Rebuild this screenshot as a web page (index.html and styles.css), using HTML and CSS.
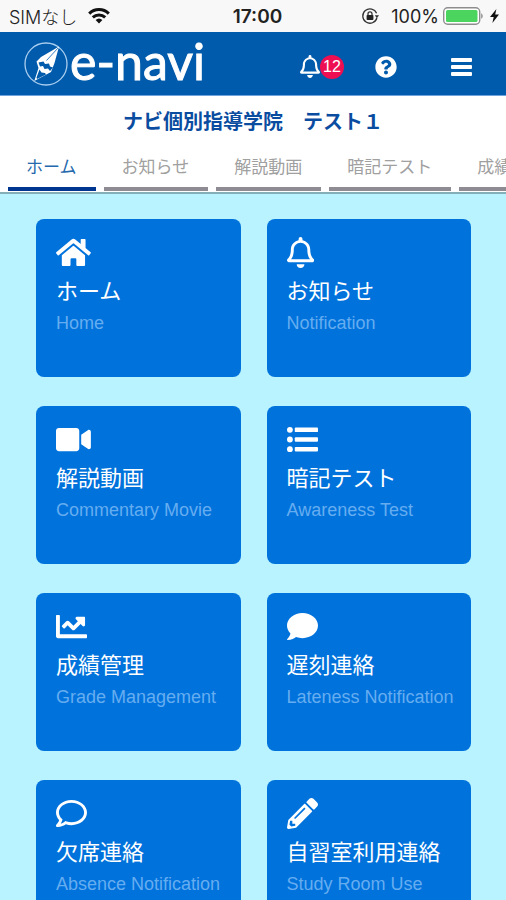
FILE: index.html
```html
<!DOCTYPE html>
<html lang="ja">
<head>
    <meta charset="UTF-8">
    <meta name="viewport" content="width=device-width, initial-scale=1.0">
    <title>e-navi</title>
    <link rel="stylesheet" href="styles.css">
</head>
<body>
    <div class="status-bar">
        <div class="status-left">
            <span>SIMなし</span>
            <svg class="wifi" viewBox="0 0 22 16" width="22" height="16" fill="none" stroke="#111" stroke-width="3">
                <path d="M1.2 5.6a14 14 0 0 1 19.6 0"/>
                <path d="M4.8 9.4a9 9 0 0 1 12.4 0"/>
                <path d="M11 15.5l-3.4-3.4a5 5 0 0 1 6.8 0z" fill="#111" stroke="none"/>
            </svg>
        </div>
        <div class="clock">17:00</div>
        <div class="status-right">
            <svg class="lock" viewBox="0 0 18 18" width="18" height="18" fill="none" stroke="#333" stroke-width="1.3">
                <path d="M15.6 6.2A7.2 7.2 0 1 0 15.9 11"/>
                <path d="M13.8 8.2h4.2l-2.1 3z" fill="#333" stroke="none"/>
                <rect x="5.6" y="8" width="6.8" height="5" rx="0.8" fill="#222" stroke="none"/>
                <path d="M7 8.4V6.8a2 2 0 0 1 4 0v1.6"/>
            </svg>
            <span>100%</span>
            <svg class="battery" viewBox="0 0 40 18" width="40" height="18">
                <rect x="0.7" y="0.7" width="36" height="16.6" rx="4" fill="#fff" stroke="#8d8d8d" stroke-width="1.4"/>
                <rect x="3" y="3" width="31.5" height="12" rx="1.5" fill="#4cd55e"/>
                <path d="M38.2 6.2c2 1 2 4.6 0 5.6z" fill="#8d8d8d"/>
            </svg>
            <svg class="bolt" viewBox="0 0 9 14" width="9" height="14">
                <path d="M6.4 0L0 8h3.7L2.4 14 9 5.6H5.2z" fill="#111"/>
            </svg>
        </div>
    </div>

    <header class="header">
        <a class="logo" href="#">
            <svg viewBox="0 0 44 44" width="44" height="44">
                <circle cx="22" cy="22" r="21" fill="none" stroke="#a9cdee" stroke-width="1.3"/>
                <path d="M35 4.500L17 15l-4.500 4.500 2 6.500-4.200 13L27 30l3.500-9z" fill="#fff"/>
                <path d="M34 6L22.500 18.500" fill="none" stroke="#005bac" stroke-width="0.800"/>
                <path d="M14.500 20.500l5-1 1.500 2.500 4-.5 1 3 3 1-3 3.500-2-2.500-3.500.5-1.500-3-3 .5z" fill="#005bac"/>
                <path d="M15.500 27.500l2 3 3.500.5 1 1.500-9 4.500-.5-1.500z" fill="#005bac"/>
            </svg>
            <span>e-navi</span>
        </a>
        <nav class="header-nav">
            <button class="icon-button bell-button" type="button" aria-label="お知らせ">
                <svg viewBox="0 0 448 512" width="20" height="23"><use href="#icon-bell"/></svg>
                <span class="badge">12</span>
            </button>
            <button class="icon-button" type="button" aria-label="ヘルプ">
                <svg viewBox="0 0 512 512" width="22" height="22"><path d="M504 256c0 136.997-111.043 248-248 248S8 392.997 8 256C8 119.083 119.043 8 256 8s248 111.083 248 248zM262.655 90c-54.497 0-89.255 22.957-116.549 63.758-3.536 5.286-2.353 12.415 2.715 16.258l34.699 26.31c5.205 3.947 12.621 3.008 16.665-2.122 17.864-22.658 30.113-35.797 57.303-35.797 20.429 0 45.698 13.148 45.698 32.958 0 14.976-12.363 22.667-32.534 33.976C247.128 238.528 216 254.941 216 296v4c0 6.627 5.373 12 12 12h56c6.627 0 12-5.373 12-12v-1.333c0-28.462 83.186-29.647 83.186-106.667 0-58.002-60.165-102-116.531-102zM256 338c-25.365 0-46 20.635-46 46 0 25.364 20.635 46 46 46s46-20.636 46-46c0-25.365-20.635-46-46-46z"/></svg>
            </button>
            <button class="icon-button" type="button" aria-label="メニュー">
                <svg viewBox="0 0 21 20" width="21" height="20">
                    <rect y="1" width="21" height="4" rx="1"/>
                    <rect y="8" width="21" height="4" rx="1"/>
                    <rect y="15" width="21" height="4" rx="1"/>
                </svg>
            </button>
        </nav>
    </header>

    <div class="school">
        <h1>ナビ個別指導学院　テスト１</h1>
        <nav class="tabs">
            <a class="tab active" href="#">ホーム</a>
            <a class="tab" href="#">お知らせ</a>
            <a class="tab" href="#">解説動画</a>
            <a class="tab" href="#">暗記テスト</a>
            <a class="tab" href="#">成績管理</a>
        </nav>
    </div>

    <main class="menu">
        <a class="card" href="#">
            <svg viewBox="0 0 576 512"><path d="M280.37 148.26L96 300.11V464a16 16 0 0 0 16 16l112.06-.29a16 16 0 0 0 15.92-16V368a16 16 0 0 1 16-16h64a16 16 0 0 1 16 16v95.64a16 16 0 0 0 16 16.05L464 480a16 16 0 0 0 16-16V300L295.67 148.26a12.19 12.19 0 0 0-15.3 0zM571.6 251.47L488 182.56V44.05a12 12 0 0 0-12-12h-56a12 12 0 0 0-12 12v72.61L318.47 43a48 48 0 0 0-61 0L4.34 251.47a12 12 0 0 0-1.6 16.9l25.5 31A12 12 0 0 0 45.15 301l235.22-193.74a12.19 12.19 0 0 1 15.3 0L530.9 301a12 12 0 0 0 16.9-1.6l25.5-31a12 12 0 0 0-1.7-16.93z"/></svg>
            <h2>ホーム</h2>
            <p>Home</p>
        </a>
        <a class="card" href="#">
            <svg viewBox="0 0 448 512"><path id="icon-bell" d="M439.39 362.29c-19.32-20.76-55.47-51.99-55.47-154.29 0-77.7-54.48-139.9-127.94-155.16V32c0-17.67-14.32-32-31.98-32s-31.98 14.33-31.98 32v20.84C118.56 68.1 64.08 130.3 64.08 208c0 102.3-36.15 133.53-55.47 154.29-6 6.45-8.66 14.16-8.61 21.71.11 16.4 12.98 32 32.1 32h383.8c19.12 0 32-15.6 32.1-32 .05-7.55-2.61-15.27-8.61-21.71zM67.53 368c21.22-27.97 44.42-74.33 44.53-159.42 0-.2-.06-.38-.06-.58 0-61.86 50.14-112 112-112s112 50.14 112 112c0 .2-.06.38-.06.58.11 85.1 23.31 131.46 44.53 159.42H67.53zM224 512c35.32 0 63.97-28.65 63.97-64H160.03c0 35.35 28.65 64 63.97 64z"/></svg>
            <h2>お知らせ</h2>
            <p>Notification</p>
        </a>
        <a class="card" href="#">
            <svg viewBox="0 0 576 512"><path d="M336.2 64H47.8C21.4 64 0 85.4 0 111.8v288.4C0 426.6 21.4 448 47.8 448h288.4c26.4 0 47.8-21.4 47.8-47.8V111.8c0-26.4-21.4-47.8-47.8-47.8zm189.4 37.7L416 177.3v157.4l109.6 75.5c21.2 14.6 50.4-.3 50.4-25.8V127.5c0-25.4-29.1-40.4-50.4-25.8z"/></svg>
            <h2>解説動画</h2>
            <p>Commentary Movie</p>
        </a>
        <a class="card" href="#">
            <svg viewBox="0 0 512 512">
                <circle cx="48" cy="96" r="48"/>
                <circle cx="48" cy="256" r="48"/>
                <circle cx="48" cy="416" r="48"/>
                <rect x="128" y="58" width="384" height="76" rx="16"/>
                <rect x="128" y="218" width="384" height="76" rx="16"/>
                <rect x="128" y="378" width="384" height="76" rx="16"/>
            </svg>
            <h2>暗記テスト</h2>
            <p>Awareness Test</p>
        </a>
        <a class="card" href="#">
            <svg viewBox="0 0 512 512"><path d="M496 384H64V80c0-8.84-7.16-16-16-16H16C7.16 64 0 71.16 0 80v336c0 17.67 14.33 32 32 32h464c8.84 0 16-7.16 16-16v-32c0-8.84-7.16-16-16-16zM464 96H345.94c-21.38 0-32.09 25.85-16.97 40.97l32.4 32.4L288 242.75l-73.37-73.37c-12.5-12.5-32.76-12.5-45.25 0l-68.69 68.69c-6.25 6.25-6.25 16.38 0 22.63l22.62 22.62c6.25 6.25 16.38 6.25 22.63 0L192 237.25l73.37 73.37c12.5 12.5 32.76 12.5 45.25 0l96-96 32.4 32.4c15.12 15.12 40.97 4.41 40.97-16.97V112c.01-8.84-7.15-16-15.99-16z"/></svg>
            <h2>成績管理</h2>
            <p>Grade Management</p>
        </a>
        <a class="card" href="#">
            <svg viewBox="0 0 512 512"><path d="M256 32C114.6 32 0 125.1 0 240c0 49.6 21.4 95 57 130.7C44.5 421.1 2.7 466 2.2 466.5c-2.2 2.3-2.8 5.7-1.5 8.7S4.8 480 8 480c66.3 0 116-31.8 140.6-51.4 32.7 12.3 69 19.4 107.4 19.4 141.4 0 256-93.1 256-208S397.4 32 256 32z"/></svg>
            <h2>遅刻連絡</h2>
            <p>Lateness Notification</p>
        </a>
        <a class="card" href="#">
            <svg viewBox="0 0 512 512"><path d="M256 32C114.6 32 0 125.1 0 240c0 47.6 19.9 91.2 52.9 126.3C38 405.7 7 439.1 6.5 439.5c-6.6 7-8.4 17.2-4.6 26S14.4 480 24 480c61.5 0 110-25.7 139.1-46.3C192 442.8 223.2 448 256 448c141.4 0 256-93.1 256-208S397.4 32 256 32zm0 368c-26.7 0-53.1-4.1-78.4-12.1l-22.7-7.2-19.5 13.8c-14.3 10.1-33.9 21.4-57.5 29 7.3-12.1 14.4-25.7 19.9-40.2l10.6-28.1-20.6-21.8C69.7 314.1 48 282.2 48 240c0-88.2 93.3-160 208-160s208 71.8 208 160-93.3 160-208 160z"/></svg>
            <h2>欠席連絡</h2>
            <p>Absence Notification</p>
        </a>
        <a class="card" href="#">
            <svg viewBox="0 0 512 512"><path d="M497.9 142.1l-46.1 46.1c-4.7 4.7-12.3 4.7-17 0l-111-111c-4.7-4.7-4.7-12.3 0-17l46.1-46.1c18.7-18.7 49.1-18.7 67.9 0l60.1 60.1c18.8 18.7 18.8 49.1 0 67.9zM284.2 99.8L21.6 362.4.4 483.9c-2.9 16.4 11.4 30.6 27.8 27.8l121.5-21.3 262.6-262.6c4.7-4.7 4.7-12.3 0-17l-111-111c-4.8-4.7-12.4-4.7-17.1 0zM124.1 339.9c-5.5-5.5-5.5-14.3 0-19.8l154-154c5.5-5.5 14.3-5.5 19.8 0s5.500 14.300 0 19.800l-154 154c-5.500 5.500-14.300 5.500-19.800 0zM88 424h48v36.300l-64.500 11.300-31.100-31.100L51.700 376H88v48z"/></svg>
            <h2>自習室利用連絡</h2>
            <p>Study Room Use</p>
        </a>
    </main>
</body>
</html>
```
FILE: styles.css
```css
* {
    box-sizing: border-box;
}

body {
    font-family: "Liberation Sans", "Noto Sans CJK JP", sans-serif;
    background-color: #b8f3ff;
    margin: 0;
    height: 100vh;
    display: flex;
    flex-direction: column;
    overflow: hidden;
}

a {
    color: inherit;
    text-decoration: none;
}

svg {
    display: block;
    flex-shrink: 0;
}

.status-bar {
    display: grid;
    grid-template-columns: 1fr auto 1fr;
    align-items: center;
    flex-shrink: 0;
    height: 32px;
    padding-left: 9px;
    background-color: #f8f8f8;
    color: #222;
    font-family: Inter, "Noto Sans CJK JP", sans-serif;
    font-size: 18px;
}

.status-left,
.status-right {
    display: flex;
    align-items: center;
}

.status-left {
    gap: 11px;
    font-weight: 300;
}

.status-right {
    justify-content: flex-end;
    padding-right: 7px;
}

.lock {
    margin-right: 12px;
}

.battery {
    margin: 0 7px 0 4px;
}

.clock {
    font-size: 19px;
    font-weight: 600;
}

.header {
    display: flex;
    justify-content: space-between;
    align-items: center;
    flex-shrink: 0;
    height: 64px;
    padding: 0 34px 0 24px;
    background-color: #005bac;
    border-bottom: 1px solid #6fa3dc;
    color: #fff;
}

.logo {
    display: flex;
    align-items: center;
    gap: 2px;
}

.logo span {
    font-family: Lato, sans-serif;
    font-size: 50px;
    line-height: 50px;
    height: 56px;
    -webkit-text-stroke: 1px #fff;
}

.header-nav {
    display: flex;
    align-items: center;
    padding-top: 6px;
}

.icon-button {
    display: flex;
    align-items: center;
    padding: 0;
    border: none;
    background: none;
    color: #fff;
    fill: currentColor;
    font-family: inherit;
    cursor: pointer;
}

.icon-button + .icon-button {
    margin-left: 54px;
}

.bell-button + .icon-button {
    margin-left: 31px;
}

.badge {
    width: 24px;
    height: 24px;
    border-radius: 50%;
    background-color: #ee0f52;
    font-size: 16px;
    line-height: 24px;
    text-align: center;
}

.school {
    flex-shrink: 0;
    background-color: #fff;
    border-bottom: 2px solid #84aeb8;
}

.school h1 {
    margin: 0;
    padding-top: 9px;
    color: #0a4c9f;
    font-size: 20px;
    line-height: 34px;
    text-align: center;
}

.tabs {
    display: flex;
    gap: 8px;
    padding: 12px 8px 1px;
    overflow: hidden;
}

.tab {
    flex-shrink: 0;
    padding: 0 19px 2px 18px;
    border-bottom: 4px solid #8e8b93;
    color: #a0a0a0;
    font-size: 17px;
    line-height: 34px;
}

.tab.active {
    border-color: #00368f;
    color: #2469ad;
}

.menu {
    display: grid;
    grid-template-columns: 1fr 1fr;
    grid-auto-rows: 158px;
    gap: 29px 26px;
    flex: 1;
    min-height: 0;
    padding: 25px 35px 25px 36px;
    overflow: hidden;
}

.card {
    padding: 18px 0 0 20px;
    border-radius: 8px;
    background-color: #0072dc;
    color: #fff;
    white-space: nowrap;
}

.card svg {
    height: 31px;
    fill: #fff;
}

.card h2 {
    margin: 8px 0 0;
    font-size: 22px;
    font-weight: normal;
    line-height: 32px;
}

.card p {
    margin: 0;
    color: #66adf0;
    font-size: 18px;
    line-height: 30px;
}
```
